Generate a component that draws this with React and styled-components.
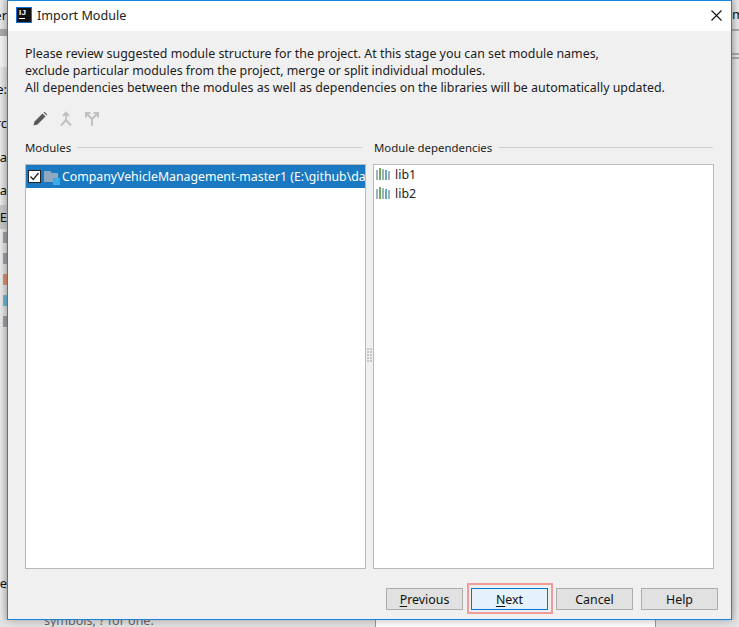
import styled, { createGlobalStyle } from "styled-components";

const Global = createGlobalStyle`
  html, body { margin: 0; padding: 0; background: #f2f2f2; }
  body { font-family: "Noto Sans", "Liberation Sans", sans-serif; font-size: 12.4px; color: #1c1c1c; }
`;

const Stage = styled.div`
  width: 739px;
  height: 627px;
  overflow: hidden;
  display: grid;
  grid-template-columns: 7px 725px 7px;
  grid-template-rows: 620px 7px;
`;

// window that sits behind the dialog, only its edges are visible
const LeftEdge = styled.div`
  display: flex;
  flex-direction: column;
  overflow: hidden;
  background: linear-gradient(90deg, #ececec, #d6d6d6);
`;
const EdgeRow = styled.div`
  height: ${(p) => p.h}px;
  flex: none;
  display: flex;
  align-items: center;
  justify-content: flex-end;
  white-space: nowrap;
  font-size: 13px;
  color: #111;
  background: ${(p) => p.bg || "transparent"};
`;
const Swatch = styled.div`
  width: 4px;
  height: 11px;
  margin: 0 0 10px 3px;
  flex: none;
  background: ${(p) => p.color};
`;
const RightEdge = styled.div`
  display: flex;
  flex-direction: column;
  overflow: hidden;
  background: linear-gradient(90deg, #d4d4d4, #ececec);
`;
const RightRow = styled.div`
  height: ${(p) => p.h}px;
  flex: none;
  overflow: hidden;
  font-size: 13px;
  line-height: ${(p) => p.h}px;
  white-space: nowrap;
  color: #111;
  border-bottom: ${(p) => (p.line ? "2px solid #a8a8a8" : "none")};
`;
const BottomEdge = styled.div`
  grid-column: 1 / 4;
  display: flex;
  overflow: hidden;
  background: #e4e4e4;
`;
const HintCell = styled.div`
  width: 375px;
  flex: none;
  padding-left: 44px;
  box-sizing: border-box;
  font-size: 12.5px;
  line-height: 14px;
  margin-top: -6px;
  color: #666;
  white-space: nowrap;
`;
const EditorCell = styled.div`
  width: 279px;
  flex: none;
  background: #fff;
  border-left: 1px solid #9a9a9a;
  border-right: 1px solid #9a9a9a;
`;

const Dialog = styled.div`
  box-sizing: border-box;
  height: 620px;
  display: flex;
  flex-direction: column;
  background: #f0f0f0;
  border: 1px solid #1883d7;
  box-shadow: 0 0 9px rgba(0, 0, 0, 0.3);
  position: relative;
`;
const TitleBar = styled.div`
  box-sizing: border-box;
  height: 30px;
  flex: none;
  display: flex;
  align-items: center;
  padding: 0 9px 2px 8px;
  background: #fff;
`;
const AppLogo = styled.div`
  box-sizing: border-box;
  width: 16px;
  height: 16px;
  margin-right: 5px;
  background: #111;
  border: 1px solid #1470d0;
  color: #fff;
  font: bold 8px/7px "Liberation Sans", sans-serif;
  letter-spacing: 0.4px;
  padding: 1px 0 0 2px;
  display: flex;
  flex-direction: column;
  gap: 2px;
  span:last-child {
    width: 6px;
    height: 1px;
    background: #fff;
  }
`;
const Title = styled.div`
  flex: 1;
  font-size: 12.6px;
  color: #222;
`;
const Close = styled.svg`
  width: 11px;
  height: 11px;
`;

const Body = styled.div`
  flex: 1;
  min-height: 0;
  display: flex;
  flex-direction: column;
  padding: 14px 15px 0 17px;
`;
const Intro = styled.p`
  margin: 0;
  line-height: 17px;
  white-space: nowrap;
`;
const Toolbar = styled.div`
  height: 18px;
  margin: 14px 0 0 7px;
  display: flex;
  align-items: center;
  gap: 10px;
`;
const ToolIcon = styled.svg`
  width: 16px;
  height: 16px;
  flex: none;
`;
const Panels = styled.div`
  flex: 1;
  min-height: 0;
  margin-top: 10px;
  display: grid;
  grid-template-columns: 341px 7px 341px;
`;
const Panel = styled.div`
  display: flex;
  flex-direction: column;
  min-width: 0;
`;
const PanelHead = styled.div`
  height: 18px;
  margin-bottom: 8px;
  flex: none;
  display: flex;
  align-items: center;
  gap: 6px;
  font-size: 11.4px;
  padding-left: ${(p) => (p.right ? "1px" : "0")};
  padding-right: ${(p) => (p.right ? "1px" : "4px")};
  &::after {
    content: "";
    flex: 1;
    height: 1px;
    background: #cfcfcf;
  }
`;
const ListBox = styled.div`
  flex: 1;
  min-height: 0;
  box-sizing: border-box;
  overflow: hidden;
  background: #fff;
  border: 1px solid #b9b9b9;
`;
const ModuleRow = styled.div`
  height: 23px;
  display: flex;
  align-items: center;
  padding-left: 2px;
  background: #1a79c0;
  color: #fff;
  font-size: 12.3px;
  white-space: nowrap;
`;
const Check = styled.span`
  box-sizing: border-box;
  width: 13px;
  height: 13px;
  flex: none;
  margin-right: 3px;
  background: #fff;
  border: 1px solid #222;
  display: flex;
  align-items: center;
  justify-content: center;
`;
const FolderWrap = styled.svg`
  width: 16px;
  height: 16px;
  flex: none;
  margin-right: 2px;
`;
const LibRow = styled.div`
  height: 19px;
  display: flex;
  align-items: center;
  gap: 4px;
  padding-left: 2px;
`;
const Splitter = styled.div`
  display: grid;
  grid-template-columns: 2px 2px;
  grid-auto-rows: 2px;
  gap: 1px;
  align-content: center;
  justify-content: center;
  padding-bottom: 24px;
  margin-top: 26px;
  i {
    background: #c6c6c6;
  }
`;

const Footer = styled.div`
  height: 50px;
  flex: none;
  display: flex;
  justify-content: flex-end;
  align-items: flex-start;
  gap: 8px;
  padding: 19px 13px 0 0;
  box-sizing: border-box;
`;
const Button = styled.div`
  box-sizing: border-box;
  position: relative;
  width: 77px;
  height: 22px;
  display: flex;
  align-items: center;
  justify-content: center;
  color: #111;
  background: ${(p) => (p.primary ? "#e5f1fb" : "#e1e1e1")};
  border: 1px solid ${(p) => (p.primary ? "#0078d7" : "#adadad")};
  u {
    text-underline-offset: 2px;
  }
  ${(p) =>
    p.primary &&
    `&::after {
      content: "";
      position: absolute;
      top: -6px;
      left: -5px;
      right: -6px;
      bottom: -5px;
      border: 2px solid #f29b9b;
    }`}
`;

function LibIcon() {
  return (
    <svg width="15" height="13" viewBox="0 0 15 13">
      <rect x="0" y="2" width="2" height="10" fill="#9fb2bc" />
      <rect x="3" y="0" width="2" height="12" fill="#6dae5c" />
      <rect x="6" y="1" width="2" height="11" fill="#9fb2bc" />
      <rect x="9" y="2" width="2" height="10" fill="#62a9c9" />
      <rect x="12" y="3" width="2" height="9" fill="#9fb2bc" />
    </svg>
  );
}

const dots = Array.from({ length: 10 });

export default function App() {
  return (
    <Stage>
      <Global />
      <LeftEdge>
        <EdgeRow h={29}>er</EdgeRow>
        <EdgeRow h={7} bg="#a9a9a9" />
        <EdgeRow h={31} bg="#f4f4f4" />
        <EdgeRow h={44}>e:</EdgeRow>
        <EdgeRow h={1} />
        <EdgeRow h={22}>rc</EdgeRow>
        <EdgeRow h={13} />
        <EdgeRow h={20}>a</EdgeRow>
        <EdgeRow h={15} />
        <EdgeRow h={16}>t a</EdgeRow>
        <EdgeRow h={7} />
        <EdgeRow h={24} bg="#c8c8c8">E</EdgeRow>
        <EdgeRow h={3} />
        <Swatch color="#9a9ea3" />
        <Swatch color="#9a9ea3" />
        <Swatch color="#d98f6e" />
        <Swatch color="#6fb3d2" />
        <Swatch color="#9a9ea3" />
        <EdgeRow h={237} />
        <EdgeRow h={18}>le</EdgeRow>
      </LeftEdge>

      <Dialog>
        <TitleBar>
          <AppLogo>
            <span>IJ</span>
            <span />
          </AppLogo>
          <Title>Import Module</Title>
          <Close viewBox="0 0 11 11">
            <path d="M0.5 0.5 L10.5 10.5 M10.5 0.5 L0.5 10.5" stroke="#111" strokeWidth="1.1" fill="none" />
          </Close>
        </TitleBar>
        <Body>
          <Intro>
            Please review suggested module structure for the project. At this stage you can set module names,
            <br />
            exclude particular modules from the project, merge or split individual modules.
            <br />
            All dependencies between the modules as well as dependencies on the libraries will be automatically updated.
          </Intro>
          <Toolbar>
            <ToolIcon viewBox="0 0 16 16">
              <path d="M1.5 14.5 L2.5 10.5 L10.5 2.5 L13.5 5.5 L5.5 13.5 Z" fill="#5a5a5a" />
              <path d="M11.5 1.5 L12.5 0.8 L15.2 3.5 L14.5 4.5 Z" fill="#5a5a5a" />
            </ToolIcon>
            <ToolIcon viewBox="0 0 16 16">
              <path d="M8 1.5 V9 M5 5 L8 1.8 L11 5 M8 9 L3 14.5 M8 9 L13 14.5" stroke="#c2c2c2" strokeWidth="2" fill="none" />
            </ToolIcon>
            <ToolIcon viewBox="0 0 16 16">
              <path d="M8 15 V8 L2.5 2.5 M8 8 L13.5 2.5 M2 6.5 V2 H6.5 M9.5 2 H14 V6.5" stroke="#c2c2c2" strokeWidth="2" fill="none" />
            </ToolIcon>
          </Toolbar>
          <Panels>
            <Panel>
              <PanelHead>Modules</PanelHead>
              <ListBox>
                <ModuleRow>
                  <Check>
                    <svg width="11" height="11" viewBox="0 0 11 11">
                      <path d="M1.5 5.5 L4.2 8.5 L9.5 2" stroke="#222" strokeWidth="1.3" fill="none" />
                    </svg>
                  </Check>
                  <FolderWrap viewBox="0 0 16 16">
                    <path d="M0 2 H6 L8 4 H14 V13 H0 Z" fill="#8ea9bf" />
                    <rect x="9" y="9" width="7" height="7" fill="#3aaee4" />
                  </FolderWrap>
                  CompanyVehicleManagement-master1 (E:\github\da
                </ModuleRow>
              </ListBox>
            </Panel>
            <Splitter>
              {dots.map((_, i) => (
                <i key={i} />
              ))}
            </Splitter>
            <Panel>
              <PanelHead right>Module dependencies</PanelHead>
              <ListBox>
                <LibRow>
                  <LibIcon />
                  lib1
                </LibRow>
                <LibRow>
                  <LibIcon />
                  lib2
                </LibRow>
              </ListBox>
            </Panel>
          </Panels>
        </Body>
        <Footer>
          <Button>
            <span>
              <u>P</u>revious
            </span>
          </Button>
          <Button primary>
            <span>
              <u>N</u>ext
            </span>
          </Button>
          <Button>Cancel</Button>
          <Button>Help</Button>
        </Footer>
      </Dialog>

      <RightEdge>
        <RightRow h={29} line>m</RightRow>
        <RightRow h={22} line />
        <RightRow h={2} line />
      </RightEdge>
      <BottomEdge>
        <HintCell>symbols, ? for one.</HintCell>
        <EditorCell />
      </BottomEdge>
    </Stage>
  );
}
